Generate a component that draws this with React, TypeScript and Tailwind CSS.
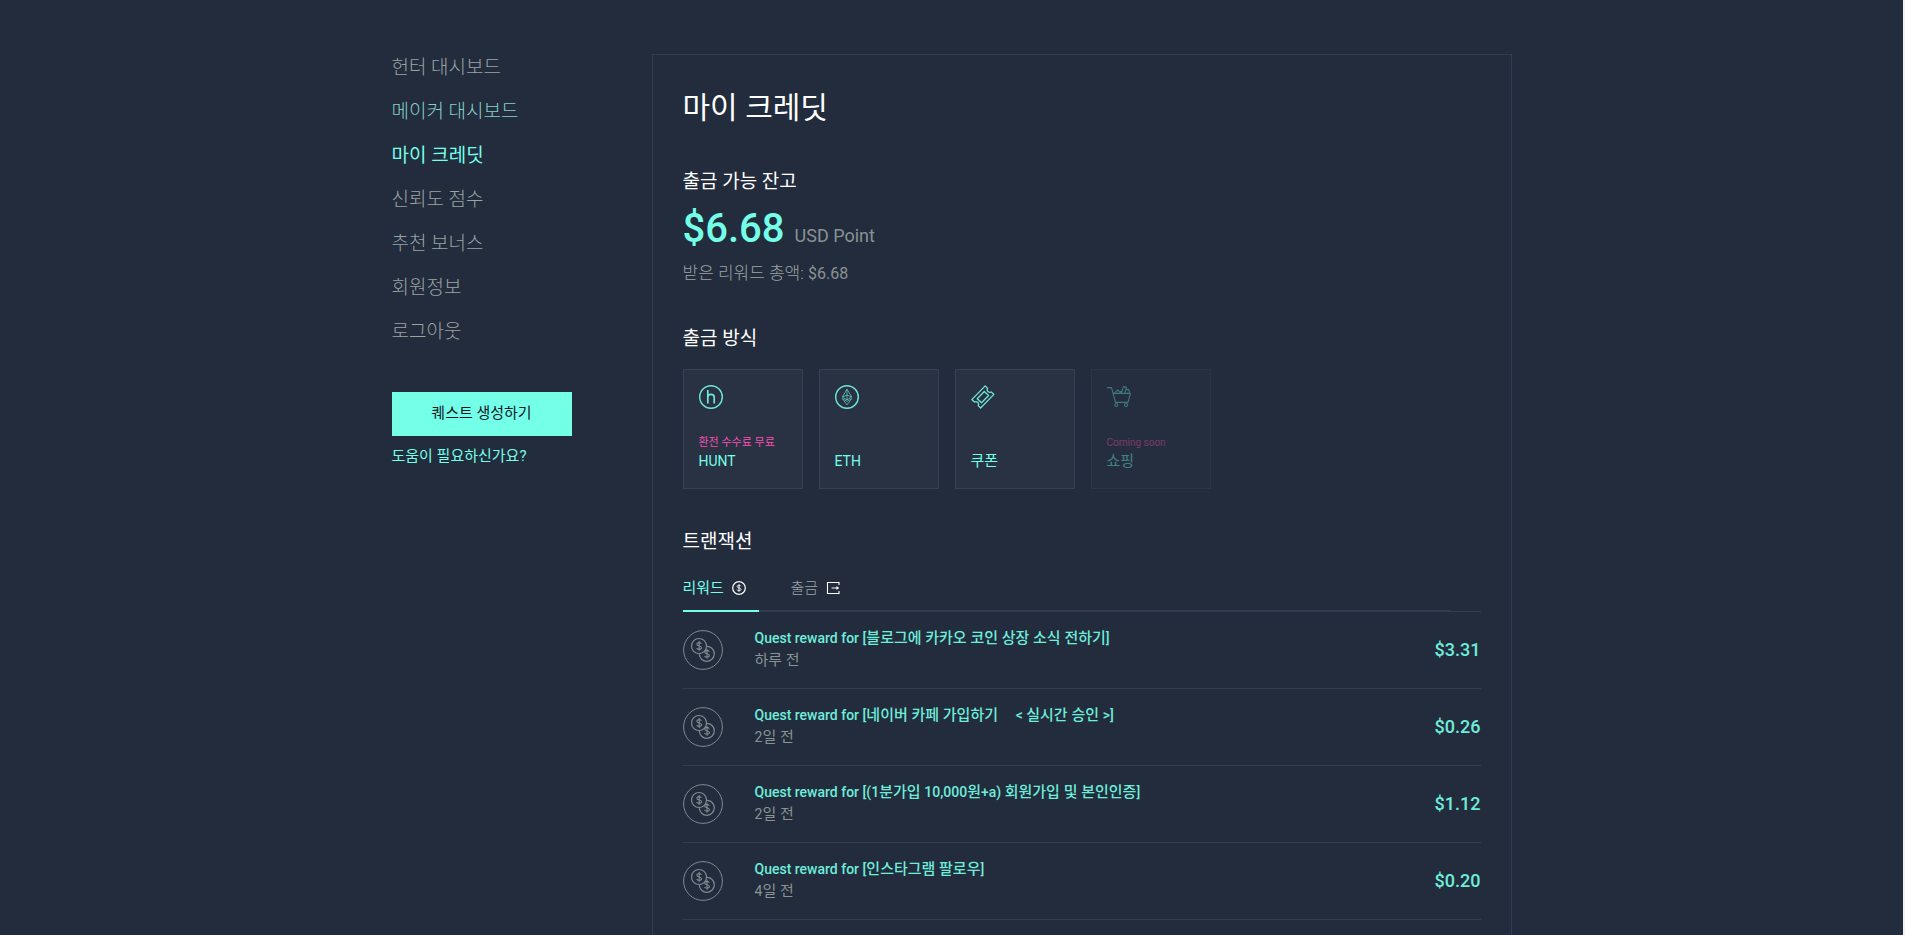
import type { ReactNode } from "react";

const menu = [
  { label: "헌터 대시보드", className: "font-light text-[#9ba3a5]" },
  { label: "메이커 대시보드", className: "font-light text-[#86cfc6]" },
  { label: "마이 크레딧", className: "text-[#74ffe9]" },
  { label: "신뢰도 점수", className: "font-light text-[#9ba3a5]" },
  { label: "추천 보너스", className: "font-light text-[#9ba3a5]" },
  { label: "회원정보", className: "font-light text-[#9ba3a5]" },
  { label: "로그아웃", className: "font-light text-[#9ba3a5]" },
];

const transactions = [
  { title: "Quest reward for [블로그에 카카오 코인 상장 소식 전하기]", time: "하루 전", amount: "$3.31" },
  { title: "Quest reward for [네이버 카페 가입하기 \u00a0\u00a0\u00a0 < 실시간 승인 >]", time: "2일 전", amount: "$0.26" },
  { title: "Quest reward for [(1분가입 10,000원+a) 회원가입 및 본인인증]", time: "2일 전", amount: "$1.12" },
  { title: "Quest reward for [인스타그램 팔로우]", time: "4일 전", amount: "$0.20" },
];

// Hangul looks small next to Roboto, so it goes one pixel up in mixed text
function MixedText({ text }: { text: string }) {
  return text
    .split(/([가-힣][가-힣 ]*)/)
    .map((part, idx) =>
      idx % 2 === 1 ? (
        <span key={idx} className="text-[15px]">
          {part}
        </span>
      ) : (
        part
      )
    );
}

function HuntIcon() {
  return (
    <svg viewBox="0 0 24 24" className="size-6" fill="none" stroke="#6ee8d6" aria-hidden="true">
      <circle cx="12" cy="12" r="11.3" strokeWidth="1.4" />
      <path d="M8.8 5v13.6M8.8 12.2c0-1.8 1.3-2.8 3.2-2.8s3.2 1 3.2 2.8v6.4" strokeWidth="1.7" />
    </svg>
  );
}

function EthIcon() {
  return (
    <svg viewBox="0 0 24 24" className="size-6" fill="none" stroke="#6ee8d6" aria-hidden="true">
      <circle cx="12" cy="12" r="11.3" strokeWidth="1.4" />
      <path
        d="M12 4.2 7.3 12 12 14.8 16.7 12zM12 4.2v10.6M7.3 12 12 10l4.7 2M7.3 13.6 12 19.8l4.7-6.2L12 16.4z"
        strokeWidth="0.8"
        strokeLinejoin="round"
        opacity="0.8"
      />
    </svg>
  );
}

function CouponIcon() {
  return (
    <svg viewBox="0 0 24 24" className="size-6" fill="none" stroke="#6ee8d6" strokeWidth="1.3" strokeLinejoin="round" aria-hidden="true">
      <path d="M.8 14.6 14.2.9l2.4 2.5c-.7 1.2-.4 2.4.4 3.2.9.8 2 1.1 3.3.4l2.6 2.4L9.6 23l-2.4-2.4c.7-1.2.4-2.4-.4-3.2-.9-.8-2-1.1-3.3-.4z" />
      <path d="M6.2 13.8 13.3 6.5l4.3 4-7.1 7.3z" />
    </svg>
  );
}

function CartIcon() {
  return (
    <svg viewBox="0 0 24 24" className="size-6" fill="none" stroke="#6ee8d6" strokeWidth="1.1" strokeLinejoin="round" aria-hidden="true">
      <path d="M0 2.6h4.5l4 14.8h12.5l2.4-9H6.2" />
      <path d="M7.5 8.2 10.8 4.8l2.6 3M12.8 7l3-1.5M14.2 8l2.4-6.4 3 .8-1.8 5.8M18.5 5l3.2-.5 1 3.7" />
      <circle cx="9.3" cy="20" r="1.5" />
      <circle cx="19" cy="20" r="1.5" />
    </svg>
  );
}

function DollarIcon() {
  return (
    <svg viewBox="0 0 14 14" className="size-3.5" fill="none" stroke="#f4f6f6" aria-hidden="true">
      <circle cx="7" cy="7" r="6.3" strokeWidth="1.3" />
      <path d="M9 5.3C8.7 4.6 8 4.3 7 4.3c-1.1 0-1.9.5-1.9 1.3C5.1 7.3 9 6.5 9 8.4c0 .8-.9 1.3-2 1.3s-1.8-.4-2.1-1.1M7 3.3v7.4" />
    </svg>
  );
}

function WithdrawIcon() {
  return (
    <svg viewBox="0 0 14 14" className="size-3.5" fill="none" stroke="#ffffff" aria-hidden="true">
      <path d="M13 4V1.5H1.5v11H13V10" strokeWidth="1.1" />
      <path d="M5.5 7h7" strokeWidth="1.2" opacity="0.8" />
      <path d="M10.5 5 13 7l-2.5 2z" fill="#ffffff" stroke="none" />
    </svg>
  );
}

function CoinsIcon() {
  return (
    <svg viewBox="0 0 40 40" className="size-10 shrink-0" fill="none" stroke="#7f8b90" aria-hidden="true">
      <circle cx="20" cy="20" r="19.4" />
      <circle cx="16" cy="16" r="7.5" strokeWidth="1.2" />
      <path d="M23.9 16.3a7.5 7.5 0 1 1-7.6 7.8" strokeWidth="1.2" />
      <path d="M18.5 13.9c-.4-.9-1.2-1.3-2.3-1.3-1.3 0-2.3.6-2.3 1.6 0 2.4 4.7 1.2 4.7 3.6 0 1-1.1 1.6-2.4 1.6s-2.2-.5-2.5-1.4M16.2 11v10" strokeWidth="1.1" />
      <path d="M26.3 21.7c-.4-.9-1.2-1.3-2.3-1.3-1.3 0-2.3.6-2.3 1.6 0 2.4 4.7 1.2 4.7 3.6 0 1-1.1 1.6-2.4 1.6s-2.2-.5-2.5-1.4M24 18.8v10" strokeWidth="1.1" />
    </svg>
  );
}

function MethodCard({ icon, label, note, disabled }: { icon: ReactNode; label: string; note?: ReactNode; disabled?: boolean }) {
  return (
    <button
      type="button"
      disabled={disabled}
      className="flex size-30 flex-col items-start border border-[#364354] bg-[#283243] px-[15px] pt-[15px] pb-[17px] text-left disabled:opacity-40"
    >
      {icon}
      <span className="mt-auto text-[10px] leading-4 text-[#fb4fb4]">{note}</span>
      <span className="text-sm leading-5 text-[#74ffe9]">
        <MixedText text={label} />
      </span>
    </button>
  );
}

export default function App() {
  return (
    <div lang="ko" className="min-h-screen border-r-2 border-[#f1f1f1] bg-[#222c3d] pt-[54px] font-['Roboto','Noto_Sans_CJK_KR',sans-serif] text-white">
      <div className="mx-auto flex max-w-[1120px] items-start">
        <aside className="w-[180px] shrink-0">
          <nav>
            <ul className="flex flex-col gap-4">
              {menu.map((item) => (
                <li key={item.label}>
                  <a href="#" className={`block text-[19px] leading-7 ${item.className}`}>
                    {item.label}
                  </a>
                </li>
              ))}
            </ul>
          </nav>
          <button type="button" className="mt-[46px] h-11 w-full bg-[#74ffe9] pb-0.5 text-[15px] text-[#101828]">
            퀘스트 생성하기
          </button>
          <a href="#" className="mt-2 block text-[15px] leading-6 text-[#74ffe9]">
            도움이 필요하신가요?
          </a>
        </aside>

        <main className="ml-20 min-h-[900px] flex-1 border border-[#323e50] px-[30px] pt-[30px]">
          <h1 className="text-[30px] leading-[46px]">마이 크레딧</h1>

          <section className="mt-[38px]">
            <h2 className="text-[19px] leading-[26px]">출금 가능 잔고</h2>
            <p className="mt-2.5 flex items-baseline gap-2.5 leading-12">
              <strong className="text-[40px] font-medium text-[#74ffe9]">$6.68</strong>
              <span className="text-lg text-[#8a9294]">USD Point</span>
            </p>
            <p className="mt-2 text-[17px] leading-6 font-light text-[#9ba3a5]">
              받은 리워드 총액: <span className="text-base font-normal text-[#8a9294]">$6.68</span>
            </p>
          </section>

          <section className="mt-10">
            <h2 className="text-[19px] leading-[26px]">출금 방식</h2>
            <div className="mt-[17px] flex gap-4">
              <MethodCard icon={<HuntIcon />} label="HUNT" note={<span className="text-[11px]">환전 수수료 무료</span>} />
              <MethodCard icon={<EthIcon />} label="ETH" />
              <MethodCard icon={<CouponIcon />} label="쿠폰" />
              <MethodCard icon={<CartIcon />} label="쇼핑" note="Coming soon" disabled />
            </div>
          </section>

          <section className="mt-10">
            <h2 className="text-[19px] leading-[26px]">트랜잭션</h2>
            <div className="mt-[9px] border-b border-[#323e50]">
              <div role="tablist" className="-mb-px mr-[30px] flex gap-8 border-b-2 border-[#323e50]">
                <button type="button" role="tab" aria-selected="true" className="-mb-0.5 flex h-12 w-[76px] items-center gap-2 border-b-2 border-[#74ffe9] pt-0.5 text-[15px] text-[#74ffe9]">
                  리워드
                  <DollarIcon />
                </button>
                <button type="button" role="tab" aria-selected="false" className="flex h-[46px] items-center gap-2 pt-0.5 text-[15px] font-light text-[#9ba3a5]">
                  출금
                  <WithdrawIcon />
                </button>
              </div>
            </div>
            <ul>
              {transactions.map((tx) => (
                <li key={tx.title} className="flex h-[77px] items-center border-b border-[#323e50]">
                  <CoinsIcon />
                  <div className="ml-8 flex-1 pb-0.5">
                    <p className="text-sm leading-[22px] font-medium text-[#6eeddb]">
                      <MixedText text={tx.title} />
                    </p>
                    <p className="text-sm leading-[22px] text-[#8a9294]">
                      <MixedText text={tx.time} />
                    </p>
                  </div>
                  <span className="text-lg font-medium text-[#6eeddb]">{tx.amount}</span>
                </li>
              ))}
            </ul>
          </section>
        </main>
      </div>
    </div>
  );
}
